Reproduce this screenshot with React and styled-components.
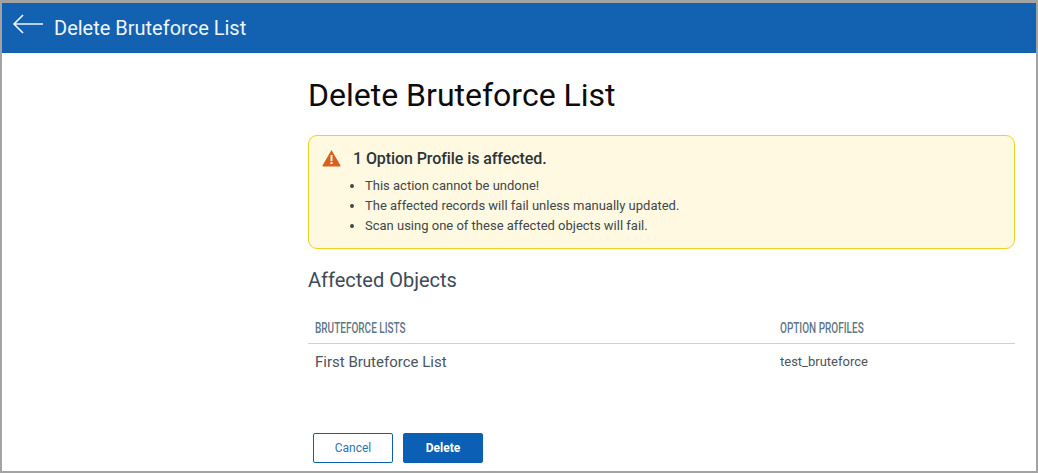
import React from 'react';
import styled, { createGlobalStyle } from 'styled-components';

const GlobalStyle = createGlobalStyle`
    html, body {
        margin: 0;
        padding: 0;
        background: #fff;
    }
    * {
        box-sizing: border-box;
    }
`;

const Frame = styled.div`
    width: 1038px;
    height: 473px;
    overflow: hidden;
    border: 2px solid #a3a3a3;
    border-top-width: 3px;
    background: #fff;
    font-family: Roboto, 'Liberation Sans', sans-serif;
`;

const Header = styled.header`
    height: 50px;
    background: #1362b1;
    color: #f1f5fa;
    display: flex;
    align-items: center;
    padding-left: 10px;
    gap: 10px;
    font-size: 20px;
    line-height: 50px;
`;

const BackIcon = styled.svg`
    width: 32px;
    height: 24px;
    margin-top: -9px;
    flex: none;
`;

const Main = styled.main`
    width: 707px;
    margin-left: 306px;
`;

const Title = styled.h1`
    margin: 0;
    padding-top: 21px;
    font-size: 32px;
    line-height: 42px;
    font-weight: 400;
    color: #0c0c0c;
`;

const Alert = styled.section`
    margin-top: 19px;
    height: 114px;
    border: 1px solid #eed21f;
    border-radius: 9px;
    background: #fef9e0;
    padding: 11px 13px;
`;

const AlertHead = styled.div`
    display: flex;
    align-items: center;
    gap: 12px;
    height: 22px;
    font-size: 16px;
    font-weight: 500;
    color: #2d3438;
    letter-spacing: -0.08px;
`;

const WarnIcon = styled.svg`
    width: 19px;
    height: 18px;
    flex: none;
`;

const AlertList = styled.ul`
    margin: 7px 0 0;
    padding-left: 43px;
    font-size: 13px;
    line-height: 20px;
    color: #3f474d;
`;

const SubTitle = styled.h2`
    margin: 19px 0 0;
    font-size: 20px;
    line-height: 24px;
    font-weight: 400;
    color: #3d4a58;
`;

const Table = styled.div`
    margin-top: 22px;
`;

const Row = styled.div`
    display: grid;
    grid-template-columns: 465px 1fr;
    padding-left: 7px;
    align-items: center;
    height: ${(p) => p.$height}px;
    border-bottom: ${(p) => (p.$head ? '1px solid #cfd2d5' : 'none')};
`;

const HeadCell = styled.div`
    font-size: 14.5px;
    font-weight: 500;
    color: #5f7688;
    text-transform: uppercase;
    white-space: nowrap;
    transform: scaleX(0.69);
    transform-origin: left center;
`;

const Cell = styled.div`
    font-size: ${(p) => (p.$small ? 13 : 15)}px;
    color: #4b555c;
`;

const Actions = styled.div`
    display: flex;
    gap: 10px;
    margin-top: 54px;
    padding-left: 5px;
`;

const Button = styled.button`
    width: 80px;
    height: 30px;
    border-radius: 2px;
    border: 1px solid #0b5fb4;
    background: ${(p) => (p.$primary ? '#0b5fb4' : '#fff')};
    color: ${(p) => (p.$primary ? '#fff' : '#2a74c0')};
    font-family: Roboto, 'Liberation Sans', sans-serif;
    font-size: 12px;
    font-weight: ${(p) => (p.$primary ? 700 : 400)};
    padding: 0;
`;

export default function App() {
    return (
        <Frame>
            <GlobalStyle />
            <Header>
                <BackIcon viewBox="0 0 32 24" fill="none" stroke="#f1f5fa" strokeWidth="1.6">
                    <path d="M11 3 L2 12 L11 21 M2 12 H31" />
                </BackIcon>
                <span>Delete Bruteforce List</span>
            </Header>
            <Main>
                <Title>Delete Bruteforce List</Title>
                <Alert>
                    <AlertHead>
                        <WarnIcon viewBox="0 0 19 18">
                            <path
                                d="M9.5 1 L18.5 16.5 Q18.7 17.5 17.7 17.5 H1.3 Q0.3 17.5 0.5 16.5 Z"
                                fill="#d9611c"
                            />
                            <rect x="8.5" y="6" width="2" height="6" fill="#fdf3e4" />
                            <rect x="8.5" y="13" width="2" height="2" fill="#fdf3e4" />
                        </WarnIcon>
                        1 Option Profile is affected.
                    </AlertHead>
                    <AlertList>
                        <li>This action cannot be undone!</li>
                        <li>The affected records will fail unless manually updated.</li>
                        <li>Scan using one of these affected objects will fail.</li>
                    </AlertList>
                </Alert>
                <SubTitle>Affected Objects</SubTitle>
                <Table>
                    <Row $head $height={30}>
                        <HeadCell>Bruteforce Lists</HeadCell>
                        <HeadCell>Option Profiles</HeadCell>
                    </Row>
                    <Row $height={35}>
                        <Cell>First Bruteforce List</Cell>
                        <Cell $small>test_bruteforce</Cell>
                    </Row>
                </Table>
                <Actions>
                    <Button>Cancel</Button>
                    <Button $primary>Delete</Button>
                </Actions>
            </Main>
        </Frame>
    );
}
